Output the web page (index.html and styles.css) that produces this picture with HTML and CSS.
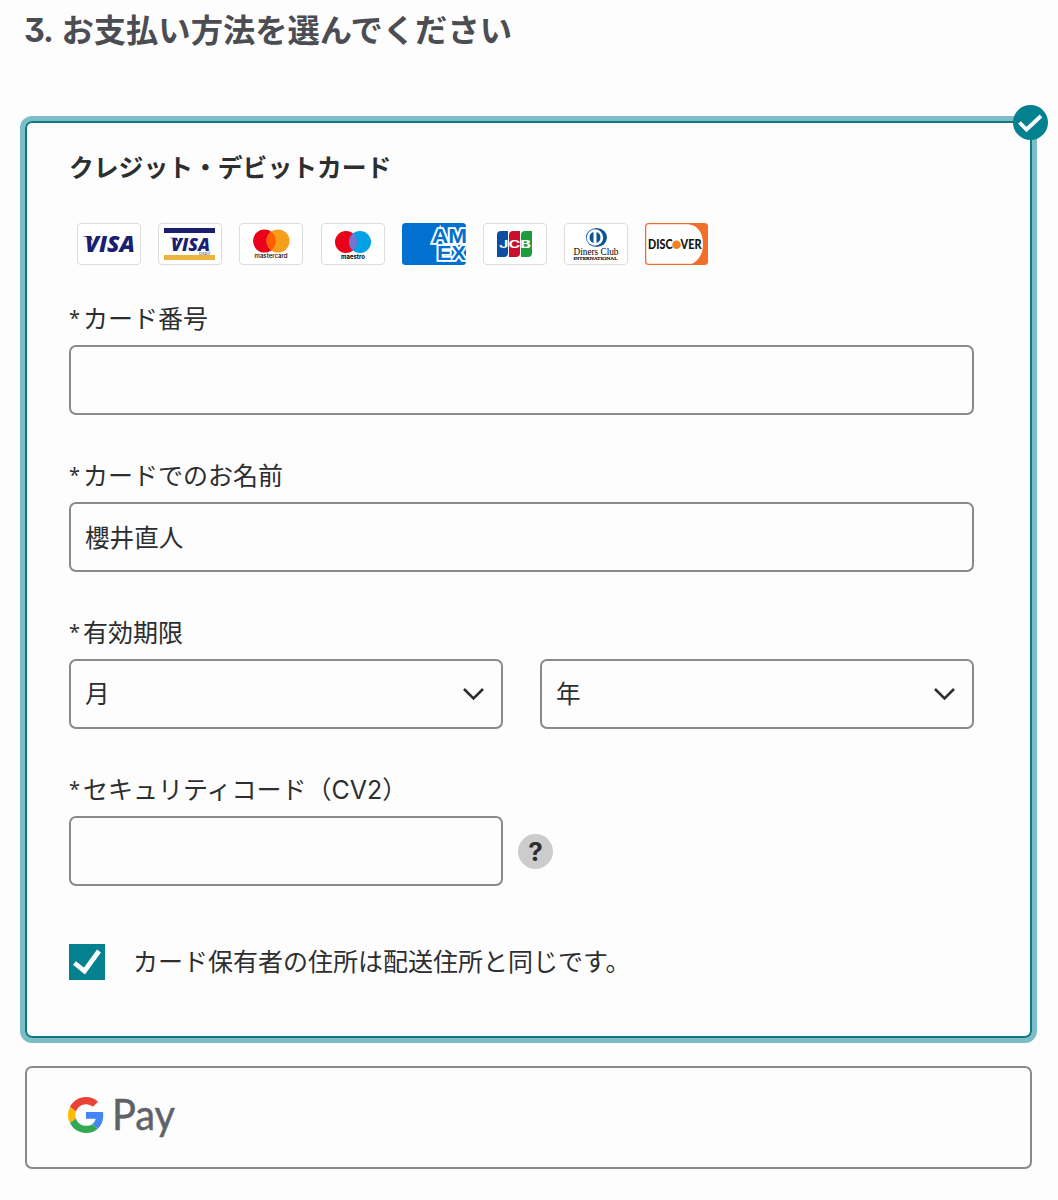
FILE: index.html
```
<!DOCTYPE html>
<html lang="ja">
<head>
    <meta charset="UTF-8">
    <meta name="viewport" content="width=device-width, initial-scale=1.0">
    <title>お支払い方法</title>
    <link rel="stylesheet" href="styles.css">
</head>
<body>
    <h1><span>3.</span> お支払い方法を選んでください</h1>

    <form class="payment-option selected">
        <span class="selected-badge">
            <svg width="35" height="35" viewBox="0 0 35 35"><path d="M6.500 17.500l7 7L28 11" fill="none" stroke="#fff" stroke-width="3.8"/></svg>
        </span>
        <h2>クレジット・デビットカード</h2>

        <div class="card-logos">
            <!-- Visa -->
            <svg viewBox="0 0 64 42">
                <rect class="card" x=".5" y=".5" width="63" height="41" rx="3.500"/>
                <text class="visa" x="8" y="29" font-size="22.500" textLength="50" lengthAdjust="spacingAndGlyphs">VISA</text>
                <path d="M5 13h9l2 5c-3-3-6-4-11-5z" fill="#1a1f71"/>
            </svg>
            <!-- Visa Debit -->
            <svg viewBox="0 0 64 42">
                <rect class="card" x=".5" y=".5" width="63" height="41" rx="3.500"/>
                <path d="M6 5h51v5H6z" fill="#1a1f71"/>
                <path d="M6 32h51v5H6z" fill="#ecb43c"/>
                <text class="visa" x="13" y="27.500" font-size="18" textLength="39" lengthAdjust="spacingAndGlyphs">VISA</text>
                <path d="M11 14.700h8l1.500 4c-3-2.500-6-3.500-9.500-4z" fill="#1a1f71"/>
                <text x="41" y="31.500" font-size="4" font-family="Inter" fill="#1a1f71" textLength="11">Debit</text>
            </svg>
            <!-- Mastercard -->
            <svg viewBox="0 0 64 42">
                <rect class="card" x=".5" y=".5" width="63" height="41" rx="3.500"/>
                <circle cx="25.500" cy="18" r="11.500" fill="#eb001b"/>
                <circle cx="39" cy="18" r="11.500" fill="#f79e1b"/>
                <path d="M32.250 8.700a11.500 11.500 0 0 1 0 18.600a11.500 11.500 0 0 1 0-18.600z" fill="#ff5f00"/>
                <text x="15.500" y="35" font-size="6" font-weight="500" font-family="Inter" textLength="33" lengthAdjust="spacingAndGlyphs">mastercard</text>
            </svg>
            <!-- Maestro -->
            <svg viewBox="0 0 64 42">
                <rect class="card" x=".5" y=".5" width="63" height="41" rx="3.500"/>
                <circle cx="25" cy="19" r="11" fill="#eb001b"/>
                <circle cx="39" cy="19" r="11" fill="#00a2e5"/>
                <path d="M32 10.500a11 11 0 0 1 0 17a11 11 0 0 1 0-17z" fill="#7375cf"/>
                <text x="20" y="36" font-size="5.800" font-weight="700" font-family="Inter" textLength="24" lengthAdjust="spacingAndGlyphs">maestro</text>
            </svg>
            <!-- American Express -->
            <svg viewBox="0 0 64 42">
                <rect width="64" height="42" rx="3.500" fill="#0071ce"/>
                <g class="amex">
                    <text x="30" y="20" textLength="35" lengthAdjust="spacingAndGlyphs">AM</text>
                    <text x="35" y="37" textLength="29" lengthAdjust="spacingAndGlyphs">EX</text>
                </g>
            </svg>
            <!-- JCB -->
            <svg viewBox="0 0 64 42">
                <rect class="card" x=".5" y=".5" width="63" height="41" rx="3.500"/>
                <path d="M18 8h7v22q0 4-4 4h-7V12q0-4 4-4z" fill="#0b4ea2"/>
                <path d="M30 8h7v22q0 4-4 4h-7V12q0-4 4-4z" fill="#c8102e"/>
                <path d="M42 8h7v22q0 4-4 4h-7V12q0-4 4-4z" fill="#1e9b3c"/>
                <text x="16" y="24.800" font-size="10" font-weight="700" font-family="Inter" fill="#fff" textLength="32" lengthAdjust="spacingAndGlyphs">JCB</text>
            </svg>
            <!-- Diners Club -->
            <svg viewBox="0 0 64 42">
                <rect class="card" x=".5" y=".5" width="63" height="41" rx="3.500"/>
                <ellipse cx="32.500" cy="14.500" rx="10.500" ry="9.500" fill="#0a5395"/>
                <circle cx="31" cy="14.500" r="8.200" fill="#fff"/>
                <path d="M29.500 9v11a5.800 5.800 0 0 1 0-11zM32.500 9v11a5.800 5.800 0 0 0 0-11z" fill="#0a5395"/>
                <text x="9.500" y="31.500" font-size="10" font-family="Liberation Serif" textLength="45" lengthAdjust="spacingAndGlyphs">Diners Club</text>
                <text x="9.500" y="37" font-size="5" font-family="Liberation Serif" stroke="#000" stroke-width=".2" textLength="44" lengthAdjust="spacingAndGlyphs">INTERNATIONAL</text>
            </svg>
            <!-- Discover -->
            <svg viewBox="0 0 64 42">
                <rect width="63" height="42" rx="3.500" fill="#f0702a"/>
                <path d="M3.500 1.200H41c13 0 17 10 17 20 0 10-5 17-11 19.600H3.500q-2.200 0-2.200-2.300v-35q0-2.300 2.200-2.300z" fill="#fff"/>
                <g font-family="Lato" font-size="12.500" font-weight="900" fill="#111">
                    <text x="3" y="26" textLength="24.500" lengthAdjust="spacingAndGlyphs">DISC</text>
                    <text x="35.500" y="26" textLength="21" lengthAdjust="spacingAndGlyphs">VER</text>
                </g>
                <circle cx="31.500" cy="21.700" r="4.300" fill="#f58220"/>
            </svg>
        </div>

        <div class="field">
            <label for="card-number"><span>*</span>カード番号</label>
            <input type="text" id="card-number">
        </div>
        <div class="field">
            <label for="card-name"><span>*</span>カードでのお名前</label>
            <input type="text" id="card-name" value="櫻井直人">
        </div>
        <div class="field">
            <label for="month"><span>*</span>有効期限</label>
            <div class="row">
                <div class="select">
                    <select id="month"><option>月</option></select>
                    <svg width="24" height="16" viewBox="0 0 24 16"><path d="M3 3l9.500 9.500L22 3"/></svg>
                </div>
                <div class="select">
                    <select id="year"><option>年</option></select>
                    <svg width="24" height="16" viewBox="0 0 24 16"><path d="M3 3l9.500 9.500L22 3"/></svg>
                </div>
            </div>
        </div>
        <div class="field">
            <label for="cv2"><span>*</span>セキュリティコード（CV2）</label>
            <div class="row cv2-row">
                <input type="text" id="cv2">
                <button type="button" class="help">?</button>
            </div>
        </div>

        <label class="same-address">
            <input type="checkbox" checked>
            <svg width="36" height="36" viewBox="0 0 36 36"><path d="M5.500 19l10 8L30 7" fill="none" stroke="#fff" stroke-width="4.800"/></svg>
            カード保有者の住所は配送住所と同じです。
        </label>
    </form>

    <div class="payment-option google-pay">
        <svg width="36" height="36" viewBox="0 0 48 48">
            <path fill="#EA4335" d="M24 9.500c3.540 0 6.710 1.220 9.210 3.600l6.850-6.850C35.900 2.380 30.470 0 24 0 14.620 0 6.510 5.380 2.560 13.220l7.980 6.190C12.430 13.720 17.740 9.500 24 9.500z"/>
            <path fill="#4285F4" d="M46.980 24.550c0-1.570-.15-3.090-.38-4.550H24v9.020h12.940c-.58 2.960-2.260 5.480-4.780 7.180l7.730 6c4.510-4.180 7.090-10.360 7.090-17.650z"/>
            <path fill="#FBBC05" d="M10.530 28.590c-.48-1.450-.76-2.990-.76-4.590s.27-3.140.76-4.590l-7.980-6.190C.92 16.460 0 20.120 0 24c0 3.880.92 7.540 2.560 10.780l7.970-6.190z"/>
            <path fill="#34A853" d="M24 48c6.480 0 11.930-2.130 15.890-5.810l-7.730-6c-2.150 1.450-4.920 2.300-8.160 2.300-6.260 0-11.570-4.220-13.470-9.910l-7.980 6.190C6.510 42.620 14.620 48 24 48z"/>
        </svg>
        <svg width="70" height="60" viewBox="0 0 70 60"><text class="pay" x="1" y="45" textLength="63" lengthAdjust="spacingAndGlyphs">Pay</text></svg>
    </div>
</body>
</html>
```
FILE: styles.css
```
* {
    box-sizing: border-box;
}
body {
    margin: 0;
    padding: 8px 26px 0 25px;
    background: #fdfdfd;
    color: #2d2e2f;
    font-family: Inter, "Noto Sans CJK JP", sans-serif;
    font-size: 25px;
    line-height: 30px;
}
h1 {
    margin: 0 0 67px;
    color: #4c4d53;
    font-size: 32.3px;
    line-height: 46px;
    font-weight: 700;
    white-space: nowrap;
}
h1 span {
    font-feature-settings: "cv09";
    letter-spacing: -1.1px;
    margin: 0 1px 0 -1px;
}
h2 {
    margin: 0 0 40px;
    font-size: 24.8px;
    line-height: 30px;
    font-weight: 700;
}
.payment-option {
    position: relative;
    border: 2px solid #8a8a8a;
    border-radius: 7px;
}
.selected {
    height: 917px;
    padding: 30px 56px 0 42px;
    border-color: #117783;
    box-shadow: 0 0 0 5px #7bbec6;
}
.selected-badge {
    position: absolute;
    top: -18px;
    right: -18px;
    width: 35px;
    height: 35px;
    border-radius: 50%;
    background: #04818f;
}
.selected-badge svg {
    display: block;
}
.card-logos {
    display: flex;
    gap: 17.2px;
    margin: 0 0 39px 8px;
}
.card-logos svg {
    width: 64px;
    height: 42px;
}
.card {
    fill: #fff;
    stroke: #dcdcdc;
}
.visa {
    font-family: "Open Sans", sans-serif;
    font-weight: 800;
    font-style: italic;
    fill: #1a1f71;
}
/* blue letters with the white outline kept outside them */
.amex {
    font-family: "Liberation Sans", sans-serif;
    font-size: 20px;
    font-weight: 700;
    fill: #0071ce;
    stroke: #fff;
    stroke-width: 3.6px;
    paint-order: stroke;
}
.field {
    margin-bottom: 46px;
}
.field label {
    display: block;
    height: 30px;
    margin-bottom: 11px;
    white-space: nowrap;
}
.field label span {
    display: inline-block;
    width: 14px;
    font-family: "Noto Sans", sans-serif;
    font-size: 20px;
    line-height: 16px;
    vertical-align: 3px;
}
.field input,
.field select {
    display: block;
    width: 100%;
    height: 70px;
    margin: 0;
    padding: 0 14px 2px;
    border: 2px solid #8a8a8a;
    border-radius: 7px;
    background: #fdfdfd;
    color: inherit;
    font: inherit;
    font-size: 24.6px;
    appearance: none;
}
.field select {
    padding-bottom: 0;
}
.row {
    display: grid;
    grid-template-columns: 434px 434px;
    gap: 37px;
}
.select {
    position: relative;
}
.select svg {
    position: absolute;
    top: 27px;
    right: 18px;
    fill: none;
    stroke: #2d2e2f;
    stroke-width: 2.6;
}
.cv2-row {
    gap: 15px;
    align-items: center;
}
.help {
    width: 35px;
    height: 35px;
    padding: 0;
    border: 0;
    border-radius: 50%;
    background: #ccc;
    color: #2d2e2f;
    font: 700 26px/35px Inter, sans-serif;
}
.same-address {
    display: flex;
    align-items: center;
    gap: 28px;
    margin-top: 58px;
}
.same-address input {
    display: none;
}
.same-address svg {
    background: #04818f;
}
.google-pay {
    display: flex;
    align-items: center;
    gap: 7px;
    height: 103px;
    margin-top: 28px;
    padding: 0 42px 6px 41px;
}
.pay {
    font-family: Lato, sans-serif;
    font-size: 43px;
    fill: #5f6368;
    stroke: #5f6368;
    stroke-width: 0.5px;
}
```
